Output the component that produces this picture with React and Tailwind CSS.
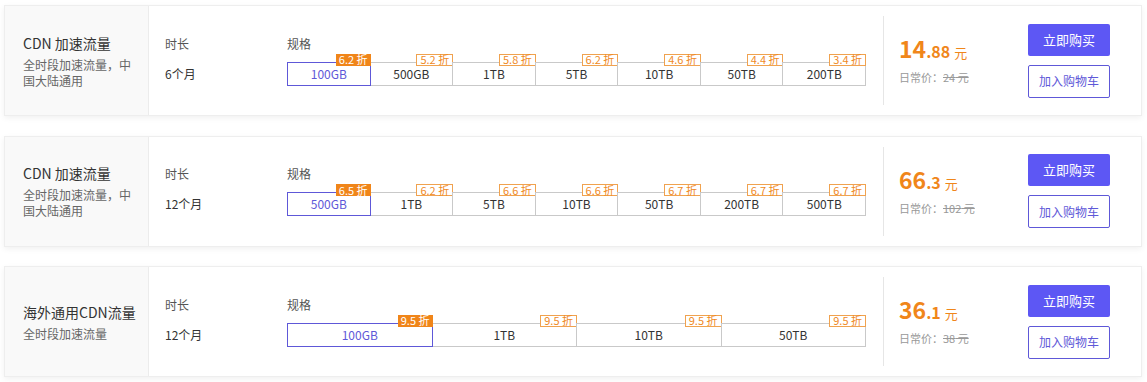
import React from 'react';

const products = [
  {
    title: 'CDN 加速流量',
    desc: '全时段加速流量，中国大陆通用',
    duration: '6个月',
    specs: [
      { label: '100GB', off: '6.2' },
      { label: '500GB', off: '5.2' },
      { label: '1TB', off: '5.8' },
      { label: '5TB', off: '6.2' },
      { label: '10TB', off: '4.6' },
      { label: '50TB', off: '4.4' },
      { label: '200TB', off: '3.4' },
    ],
    intPart: '14',
    decPart: '.88',
    listPrice: '24',
  },
  {
    title: 'CDN 加速流量',
    desc: '全时段加速流量，中国大陆通用',
    duration: '12个月',
    specs: [
      { label: '500GB', off: '6.5' },
      { label: '1TB', off: '6.2' },
      { label: '5TB', off: '6.6' },
      { label: '10TB', off: '6.6' },
      { label: '50TB', off: '6.7' },
      { label: '200TB', off: '6.7' },
      { label: '500TB', off: '6.7' },
    ],
    intPart: '66',
    decPart: '.3',
    listPrice: '102',
  },
  {
    title: '海外通用CDN流量',
    desc: '全时段加速流量',
    duration: '12个月',
    specs: [
      { label: '100GB', off: '9.5' },
      { label: '1TB', off: '9.5' },
      { label: '10TB', off: '9.5' },
      { label: '50TB', off: '9.5' },
    ],
    intPart: '36',
    decPart: '.1',
    listPrice: '38',
  },
];

const SpecBox = ({ spec, selected, first }) => (
  <div
    className={`relative flex-1 h-[24px] flex items-center justify-center text-[12px] border ${
      first ? '' : '-ml-px'
    } ${
      selected
        ? 'z-10 border-[#5e58d8] text-[#5e58d8]'
        : 'border-[#c9c9c9] text-[#333]'
    }`}
  >
    {spec.label}
    {/* discount badge */}
    <span
      className={`absolute right-[-1px] top-[-9px] h-[12px] px-[3px] flex items-center text-[11px] leading-none whitespace-nowrap ${
        selected
          ? 'bg-[#f08519] text-white'
          : 'bg-white border border-[#f0a24f] text-[#ef8a1f]'
      }`}
    >
      {spec.off} 折
    </span>
  </div>
);

const ProductCard = ({ item }) => (
  <div className="h-[111px] flex bg-white border border-[#eeeeee] shadow-[0_2px_6px_rgba(0,0,0,0.06)]">
    {/* ===== INFO ===== */}
    <div className="w-[144px] shrink-0 bg-[#f9f9f9] border-r border-[#ececec] pl-[18px] pr-[12px] flex flex-col justify-center">
      <div className="text-[14px] leading-[20px] text-[#333] mb-[4px]">{item.title}</div>
      <div className="text-[12px] leading-[16px] text-[#666]">{item.desc}</div>
    </div>

    {/* ===== DURATION ===== */}
    <div className="w-[138px] shrink-0 pl-[16px] flex flex-col justify-center">
      <div className="h-[16px] text-[12px] leading-[16px] text-[#555] mb-[10px]">时长</div>
      <div className="h-[24px] flex items-center text-[12px] text-[#333]">{item.duration}</div>
    </div>

    {/* ===== SPECS ===== */}
    <div className="w-[579px] shrink-0 flex flex-col justify-center">
      <div className="h-[16px] text-[12px] leading-[16px] text-[#555] mb-[10px]">规格</div>
      <div className="flex">
        {item.specs.map((spec, i) => (
          <SpecBox key={spec.label} spec={spec} selected={i === 0} first={i === 0} />
        ))}
      </div>
    </div>

    {/* ===== PRICE ===== */}
    <div className="ml-[17px] my-[10px] border-l border-[#e6e6e6]" />
    <div className="w-[144px] shrink-0 pl-[15px] flex flex-col justify-center">
      <div className="flex items-baseline text-[#f0861a] leading-none">
        <span className="text-[23px] font-bold">{item.intPart}</span>
        <span className="text-[16px] font-bold">{item.decPart}</span>
        <span className="text-[13px] ml-[4px]">元</span>
      </div>
      <div className="mt-[10px] text-[11px] leading-[14px] text-[#999]">
        日常价：<span className="line-through">{item.listPrice} 元</span>
      </div>
    </div>

    {/* ===== ACTIONS ===== */}
    <div className="w-[82px] shrink-0 flex flex-col justify-center gap-[9px]">
      <button className="h-[32px] rounded-[2px] bg-[#5d57f4] text-white text-[13px]">立即购买</button>
      <button className="h-[33px] rounded-[2px] bg-white border border-[#5e58d8] text-[#5e58d8] text-[12px]">
        加入购物车
      </button>
    </div>
  </div>
);

export default function App() {
  return (
    <div
      className="w-[1147px] h-[382px] bg-white pt-[5px] pl-[4px] pr-[5px] flex flex-col gap-[19.5px]"
      style={{ fontFamily: '"Noto Sans CJK SC", "Noto Sans", sans-serif' }}
    >
      {products.map((item, i) => (
        <ProductCard key={i} item={item} />
      ))}
    </div>
  );
}
